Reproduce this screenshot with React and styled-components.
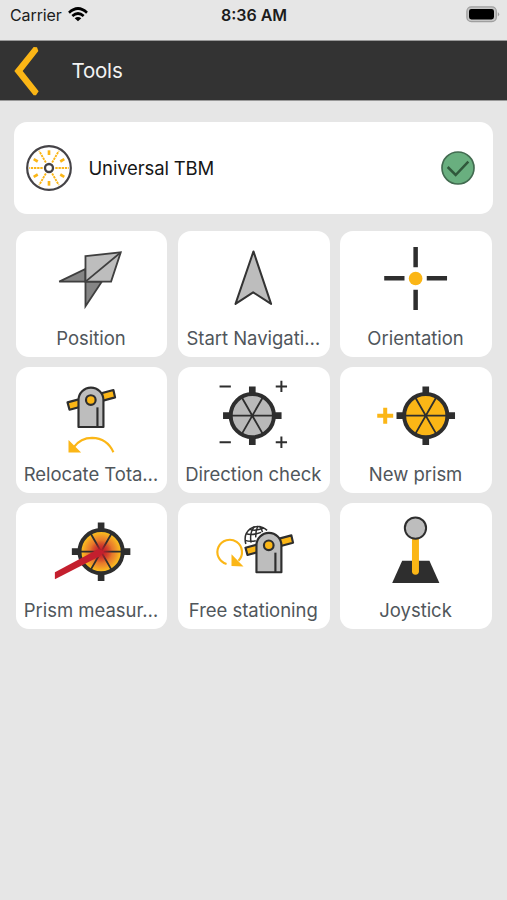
import styled, { createGlobalStyle } from 'styled-components';

const dark = '#2e2e2e';
const yellow = '#fbb616';
const grey = '#bdbdbd';

export default function App() {
    return (
        <>
            <GlobalStyle />
            <Screen>
                <StatusBar>
                    <Carrier>
                        <span>Carrier</span>
                        <WifiIcon />
                    </Carrier>
                    <Clock>8:36 AM</Clock>
                    <Power><BatteryIcon /></Power>
                </StatusBar>

                <Header>
                    <BackButton aria-label="Back"><BackIcon /></BackButton>
                    <Title>Tools</Title>
                </Header>

                <Machine>
                    <CutterHeadIcon />
                    <MachineName>Universal TBM</MachineName>
                    <CheckIcon />
                </Machine>

                <Grid>
                    {tools.map(({ label, box, Icon }) =>
                        <Tile key={label}>
                            <Picture viewBox={box}><Icon /></Picture>
                            <Label>{label}</Label>
                        </Tile>)}
                </Grid>
            </Screen>
        </>
    );
}

function WifiIcon() {
    return (
        <svg width="20" height="15" viewBox="0 0 60 45">
            <g fill="none" stroke="#000" strokeWidth="8">
                <path d="M3 17 Q30 -8 57 17" />
                <path d="M13 27 Q30 12 47 27" />
            </g>
            <path d="M30 43 L20 34 Q30 26 40 34 Z" fill="#000" />
        </svg>
    );
}

function BatteryIcon() {
    return (
        <svg width="34" height="17" viewBox="0 0 34 17">
            <rect x="0.9" y="0.9" width="29.4" height="14.8" rx="4.4" fill="#c6c6c6" stroke="#9f9f9f" strokeWidth="1.3" />
            <rect x="3" y="2.9" width="25" height="10.6" rx="2.4" fill="#000" />
            <path d="M31.8 6 Q34.6 8.3 31.8 10.6 Z" fill="#9f9f9f" />
        </svg>
    );
}

function BackIcon() {
    return (
        <svg width="25" height="50" viewBox="0 0 75 150">
            <path d="M69 4 L73 15 L26 75 L74 136 L66 148 L59 148 L1 75 L59 3 Z" fill={yellow} />
        </svg>
    );
}

function CutterHeadIcon() {
    return (
        <svg width="46" height="46" viewBox="-69 -69 138 138">
            <circle r="65.5" fill="#fff" stroke="#454347" strokeWidth="6.5" />
            {[0, 60, 120, 180, 240, 300].map(angle =>
                <g key={angle} transform={`rotate(${angle})`} stroke={yellow}>
                    <path d="M19 0 H59" strokeWidth="5.5" strokeDasharray="7 2.5" />
                    <path d="M0 -39 V-53" strokeWidth="8" />
                </g>)}
            <circle r="12" fill="#fff" stroke="#454347" strokeWidth="7" />
        </svg>
    );
}

function CheckIcon() {
    return (
        <svg width="34" height="34" viewBox="0 0 102 102">
            <circle cx="51" cy="51" r="48" fill="#69af7f" stroke="#426b50" strokeWidth="5" />
            <path d="M20 48 L44 72 L82 32" fill="none" stroke="#30583b" strokeWidth="7.5" />
        </svg>
    );
}

function PositionIcon() {
    return (
        <g stroke="#3f3f3f" strokeWidth="5.5">
            <path d="M148 170 L227 132 V170 Z" fill="#858585" />
            <path d="M227 170 V244 L276 170 Z" fill="#858585" />
            <path d="M227 93 L333 82 L304 170 H227 Z" fill={grey} />
            <path d="M227 170 L333 82" />
        </g>
    );
}

function NavigationIcon() {
    return <path d="M245 79 L298 237 L244 202 L191 237 Z" fill={grey} stroke="#333" strokeWidth="6" strokeLinejoin="round" />;
}

function OrientationIcon() {
    return (
        <>
            <path d="M242.5 66 V127 M242.5 194 V255 M148 160 H209 M276 160 H337" stroke={dark} strokeWidth="13.5" />
            <circle cx="242.5" cy="160.5" r="20.5" fill={yellow} />
        </>
    );
}

// total station, drawn around the centre of its telescope
function Station() {
    return (
        <g stroke={dark} strokeWidth="6.5" strokeLinejoin="round">
            <path d="M-70 7 L68 -30 L73 -8 L-64 29 Z" fill={yellow} />
            <path d="M-37 81 V0 A37 37 0 0 1 38 0 V81 Z" fill={grey} />
            <path d="M20 22 V81" />
            <circle r="14.5" fill={yellow} />
        </g>
    );
}

function RelocateIcon() {
    return (
        <>
            <g transform="translate(243 114)"><Station /></g>
            <path d="M192 256 Q212 228 247 228 Q292 229 311 271" fill="none" stroke={yellow} strokeWidth="6.5" />
            <path d="M176 234 L214 272 H176 Z" fill={yellow} />
        </>
    );
}

function Prism({ fill }) {
    return (
        <>
            <path d="M0 -88 V-68 M0 68 V88 M-88 0 H-68 M68 0 H88" stroke={dark} strokeWidth="20" />
            <circle r="65" fill={fill} stroke={dark} strokeWidth="12" />
            <path d="M-62 0 H62 M-31 -54 L31 54 M31 -54 L-31 54" stroke={dark} strokeWidth="5.5" />
        </>
    );
}

function DirectionIcon() {
    return (
        <>
            <g transform="translate(241.5 161)"><Prism fill="#b9b9b9" /></g>
            <path d="M143 73 H177 M143 241 H177 M312 73 H346 M329 56 V90 M312 241 H346 M329 224 V258" stroke={dark} strokeWidth="6" />
        </>
    );
}

function NewPrismIcon() {
    return (
        <>
            <g transform="translate(273 161)"><Prism fill={yellow} /></g>
            <path d="M127 161 H175 M151 137 V185" stroke={yellow} strokeWidth="12" />
        </>
    );
}

function MeasureIcon() {
    return (
        <>
            <defs>
                <radialGradient id="glow" gradientUnits="userSpaceOnUse" cx="0" cy="0" r="61">
                    <stop offset="0" stopColor="#cc2a26" />
                    <stop offset="0.3" stopColor="#d8532b" />
                    <stop offset="0.7" stopColor="#ee8d2a" />
                    <stop offset="1" stopColor="#fdc41c" />
                </radialGradient>
                <radialGradient id="flare" gradientUnits="userSpaceOnUse" cx="0" cy="0" r="34">
                    <stop offset="0" stopColor="#c81e2b" />
                    <stop offset="0.4" stopColor="#c81e2b" stopOpacity="0.6" />
                    <stop offset="1" stopColor="#c81e2b" stopOpacity="0" />
                </radialGradient>
            </defs>
            <g transform="translate(274 161)">
                <Prism fill="url(#glow)" />
                <circle r="34" fill="url(#flare)" />
                <path d="M-139 62 L-8 -8 L10 0 L-4 14 L-139 83 Z" fill="#c41f2e" />
            </g>
        </>
    );
}

function StationingIcon() {
    return (
        <>
            <g fill="none" stroke={dark} strokeWidth="4.5">
                <path d="M222 138 Q214 108 236 92 Q262 76 286 97" />
                <path d="M223 107 Q240 113 268 103 M220 127 Q236 132 252 128 M232 94 Q252 100 276 90" />
                <path d="M248 85 Q232 104 238 134 M258 84 Q251 100 252 118 M263 84 Q270 90 272 102" />
            </g>
            <g transform="translate(291 142)"><Station /></g>
            <path d="M164 198 A37 37 0 1 1 200 188" fill="none" stroke={yellow} strokeWidth="6.5" />
            <path d="M179 169 L215 206 L179 204 Z" fill={yellow} />
        </>
    );
}

function JoystickIcon() {
    return (
        <>
            <path d="M203 188 H285 L315 255 H173 Z" fill={dark} />
            <path d="M243 120 V220" stroke={yellow} strokeWidth="21" strokeLinecap="round" />
            <circle cx="243" cy="90" r="32" fill={grey} stroke={dark} strokeWidth="6" />
        </>
    );
}

const tools = [
    { label: 'Position', box: '18 18 456 282', Icon: PositionIcon },
    { label: 'Start Navigati…', box: '18 18 456 282', Icon: NavigationIcon },
    { label: 'Orientation', box: '15 18 456 282', Icon: OrientationIcon },
    { label: 'Relocate Tota…', box: '18 15 456 282', Icon: RelocateIcon },
    { label: 'Direction check', box: '18 15 456 282', Icon: DirectionIcon },
    { label: 'New prism', box: '15 15 456 282', Icon: NewPrismIcon },
    { label: 'Prism measur…', box: '18 15 456 282', Icon: MeasureIcon },
    { label: 'Free stationing', box: '18 15 456 282', Icon: StationingIcon },
    { label: 'Joystick', box: '16 15 456 282', Icon: JoystickIcon },
];

const GlobalStyle = createGlobalStyle`
    * {
        box-sizing: border-box;
    }

    body {
        margin: 0;
        background-color: #e6e6e6;
        font-family: Inter, 'Liberation Sans', sans-serif;
    }
`;

const Screen = styled.div`
    width: 100%;
    height: 900px;
    overflow: hidden;
    background-color: #e6e6e6;
`;

const StatusBar = styled.div`
    height: 40px;
    padding: 5px 7px 0 10px;
    display: grid;
    grid-template-columns: 1fr auto 1fr;
    align-items: start;
    line-height: 20px;
    color: #1c1c1c;
`;

const Carrier = styled.div`
    display: flex;
    align-items: center;
    gap: 6px;
    font-size: 16px;
    letter-spacing: -0.1px;

    svg {
        margin-top: -1px;
    }
`;

const Clock = styled.div`
    margin-right: 2px;
    font-size: 16px;
    font-weight: 600;
`;

const Power = styled.div`
    display: flex;
    justify-content: flex-end;
    padding-top: 1px;
`;

const Header = styled.header`
    height: 61px;
    padding-left: 14px;
    display: flex;
    align-items: center;
    background-color: #333;
    border-top: 1px solid #999;
    border-bottom: 1px solid #999;
`;

const BackButton = styled.button`
    width: 57.5px;
    height: 50px;
    padding: 0;
    border: none;
    background: none;
    display: flex;
    cursor: pointer;
`;

const Title = styled.h1`
    margin: 0;
    font-size: 20.5px;
    font-weight: 400;
    letter-spacing: -0.2px;
    color: #f2f2f2;
`;

const Machine = styled.section`
    height: 92px;
    margin: 21px 14px 0;
    padding: 0 18px 0 12px;
    display: flex;
    align-items: center;
    background-color: #fff;
    border-radius: 13px;
`;

const MachineName = styled.p`
    flex: 1;
    margin: 0 0 0 16.5px;
    font-size: 18.5px;
    letter-spacing: -0.15px;
    color: #161616;
`;

const Grid = styled.main`
    margin: 17.4px 15.3px 0 15.7px;
    display: grid;
    grid-template-columns: repeat(3, 151.6px);
    grid-auto-rows: 125.2px;
    gap: 10.8px 10.7px;
`;

const Tile = styled.div`
    display: flex;
    flex-direction: column;
    align-items: center;
    background-color: #fff;
    border-radius: 13px;
`;

const Picture = styled.svg`
    width: 100%;
    height: 94px;
    flex-shrink: 0;
`;

const Label = styled.p`
    margin: 0;
    padding-right: 1px;
    font-size: 18.5px;
    line-height: 27px;
    letter-spacing: -0.03px;
    white-space: nowrap;
    color: #50565b;
`;
